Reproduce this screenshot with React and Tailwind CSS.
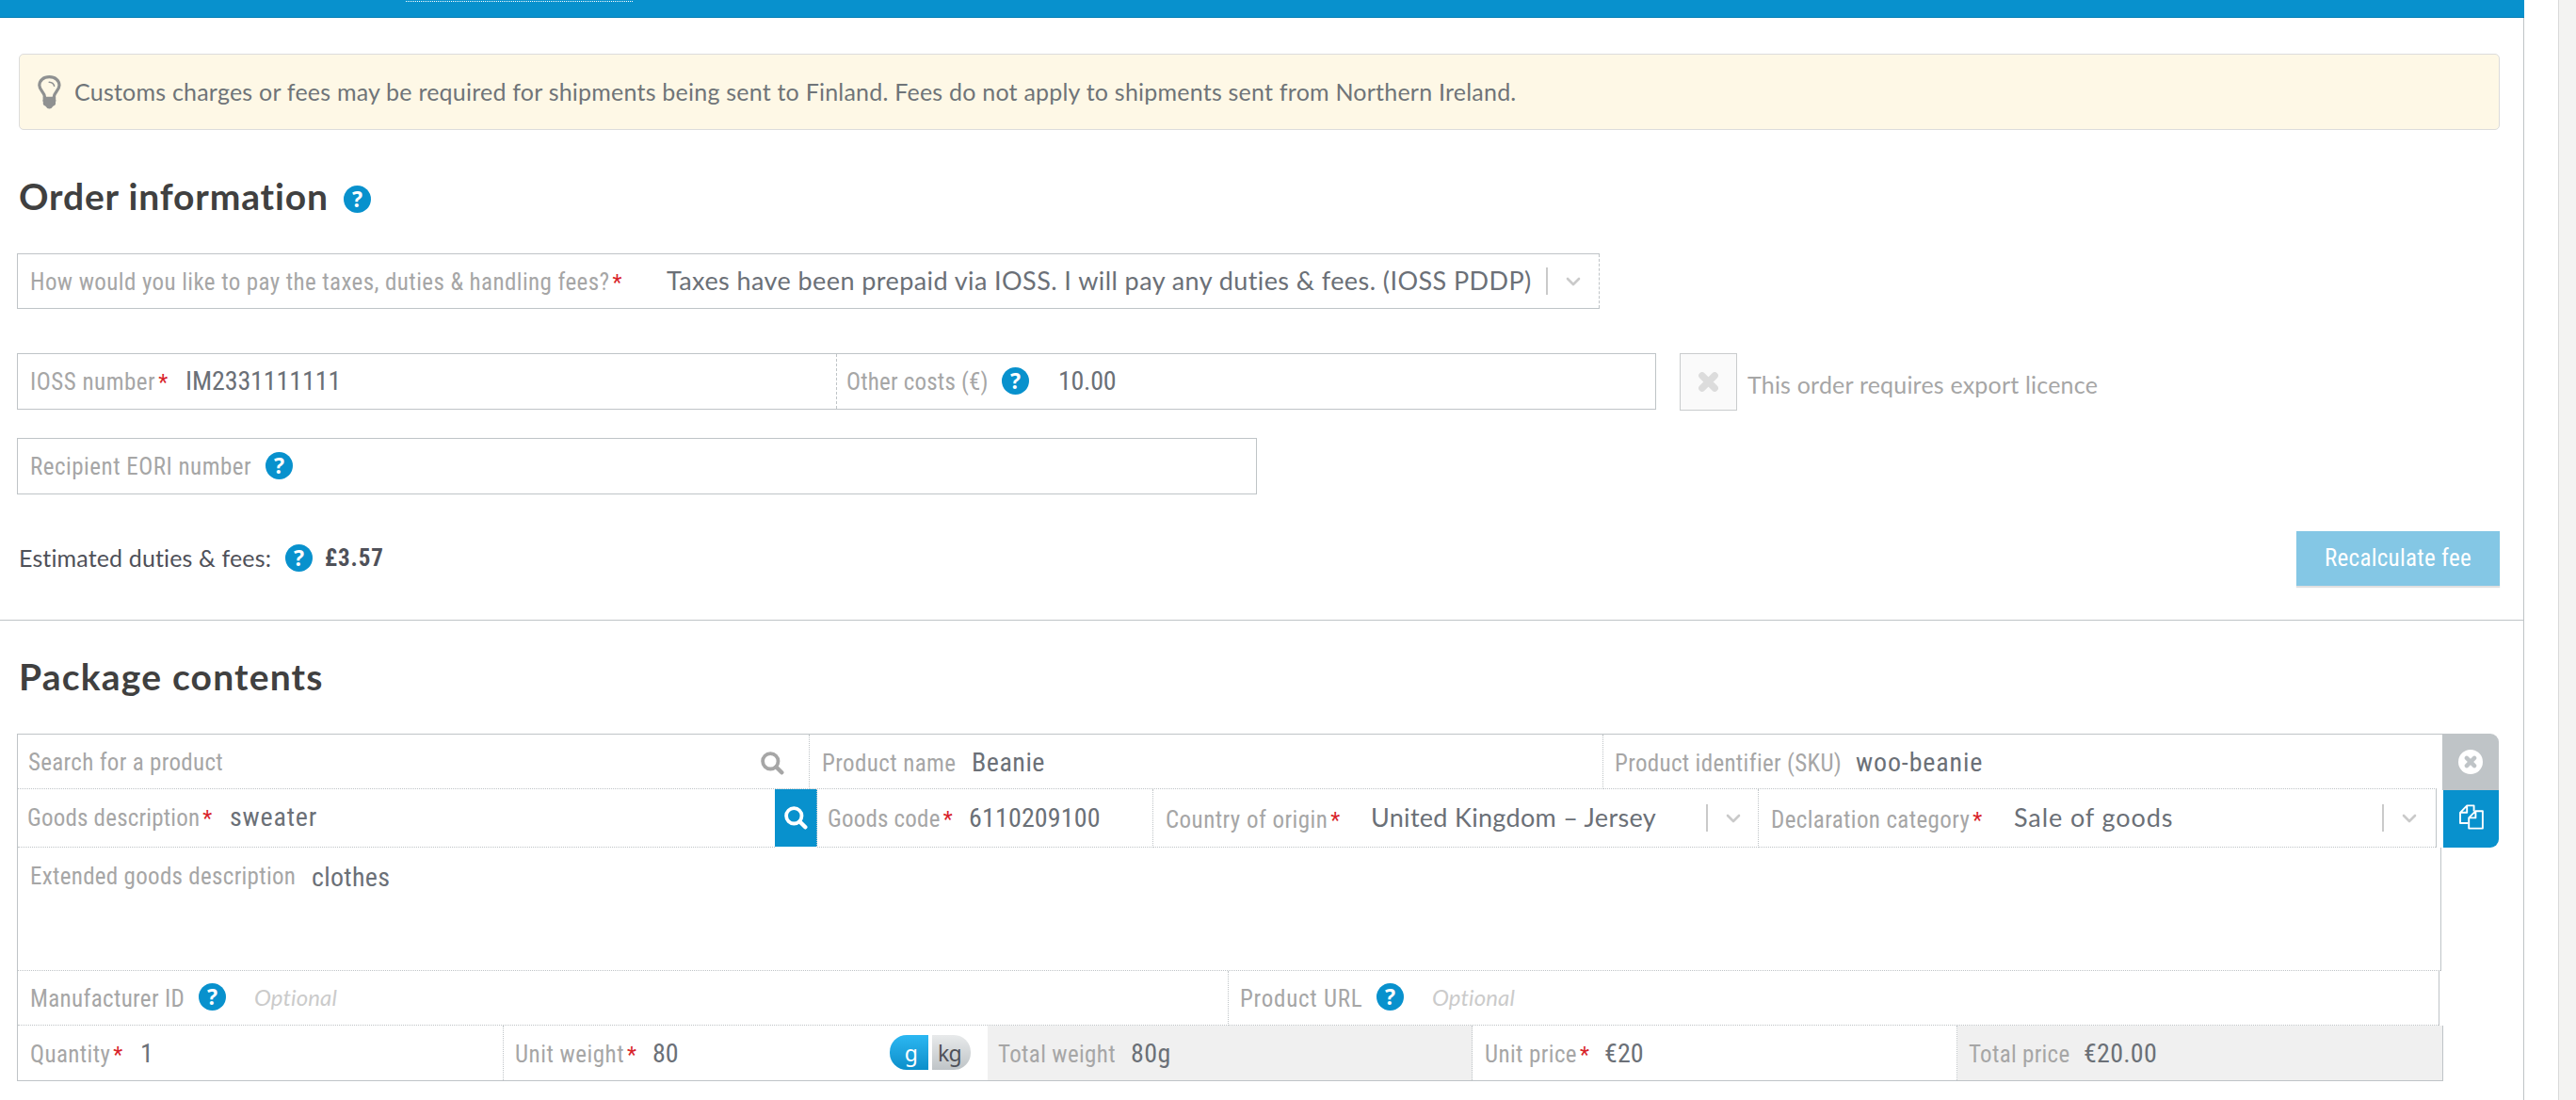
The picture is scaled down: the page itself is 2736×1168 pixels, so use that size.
import clsx from "clsx";

// Small "?" badge shown next to labels
function Help({ className }) {
  return (
    <span
      className={clsx(
        "flex h-[29px] w-[29px] shrink-0 items-center justify-center rounded-full bg-[#0891cd] font-['Noto_Sans',sans-serif] text-[23px] leading-none font-bold text-white",
        className
      )}
    >
      ?
    </span>
  );
}

function Label({ children, required, className }) {
  return (
    <span className={clsx("shrink-0 text-[25px] leading-[30px] whitespace-nowrap text-[#a6a6a6]", className)}>
      {children}
      {required && <span className="ml-[3px] text-[23px] leading-none tracking-normal text-[#d8232a]">*</span>}
    </span>
  );
}

function Value({ children, className }) {
  return (
    <span className={clsx("shrink-0 text-[28px] leading-[30px] whitespace-nowrap text-[#6b7077]", className)}>
      {children}
    </span>
  );
}

function SelectValue({ children, className }) {
  return (
    <span
      className={clsx(
        "shrink-0 font-['Lato',sans-serif] text-[27px] leading-[30px] whitespace-nowrap text-[#6b7077]",
        className
      )}
    >
      {children}
    </span>
  );
}

function Optional() {
  return (
    <span className="relative -top-[1px] font-['Lato',sans-serif] text-[24px] leading-[28px] tracking-[0.1px] text-[#cbcbcb] italic">
      Optional
    </span>
  );
}

// One table cell: label and value share a baseline
function Cell({ children, className }) {
  return <div className={clsx("flex shrink-0 items-baseline border-[#bfc4c7]", className)}>{children}</div>;
}

function SelectArrow({ className }) {
  return (
    <span className={clsx("ml-auto flex h-[29px] items-center gap-[19px] self-start", className)}>
      <span className="h-[29px] w-[2px] bg-[#cacaca]" />
      <svg width="16" height="10" viewBox="0 0 16 10" fill="none">
        <path d="M2 2 L8 8 L14 2" stroke="#cacaca" strokeWidth="2.6" strokeLinecap="round" strokeLinejoin="round" />
      </svg>
    </span>
  );
}

function SearchIcon({ className }) {
  return (
    <svg className={className} width="25" height="25" viewBox="0 0 25 25" fill="none" stroke="currentColor">
      <circle cx="10.3" cy="10.3" r="8.2" strokeWidth="3.8" />
      <path d="M16.5 16.5 L22.3 22.3" strokeWidth="4.4" strokeLinecap="round" />
    </svg>
  );
}

function BulbIcon() {
  return (
    <svg width="25" height="36" viewBox="0 0 25 36" fill="none">
      <path
        d="M7.6 23.5 C7.6 18 1.8 16 1.8 10.6 C1.8 5.4 6.2 1.7 12.4 1.7 C18.6 1.7 23 5.4 23 10.6 C23 16 17.2 18 17.2 23.5"
        stroke="#8f9191"
        strokeWidth="3.2"
      />
      <path d="M12.2 7.3 C15.2 7.5 17 8.8 17.6 11.2" stroke="#8f9191" strokeWidth="1.5" strokeLinecap="round" />
      <path
        d="M5.6 22.8 H19.2 V26 L19.6 27 L19 28 V30.6 Q18.8 32.2 16.4 32.8 Q14.8 35.6 12.4 35.6 Q10 35.6 8.4 32.8 Q6 32.2 5.8 30.6 V28 L5.2 27 L5.6 26 Z"
        fill="#8f9191"
      />
    </svg>
  );
}

function CrossIcon({ size, className }) {
  return (
    <svg className={className} width={size} height={size} viewBox="0 0 22 22" fill="none" stroke="currentColor">
      <path d="M4.6 4.6 L17.4 17.4 M17.4 4.6 L4.6 17.4" strokeWidth="7" strokeLinecap="round" />
    </svg>
  );
}

function CopyIcon() {
  return (
    <svg width="26" height="27" viewBox="0 0 26 27" fill="none" stroke="white" strokeWidth="1.9" strokeLinejoin="round">
      <path d="M9.5 20 H1 V8.8 L8.2 1.4 H15.6 V7.5 M8.2 1.4 V8.8 H1" />
      <path d="M10.2 14.4 L17.4 7.2 H24.9 V25.6 H10.2 Z M17.4 7.2 V14.4 H10.2" />
    </svg>
  );
}

function OrderInformation() {
  return (
    <section className="pr-[25px] pl-[18px]">
      <div className="mt-[38px] ml-[2px] flex h-[81px] items-center rounded-[5px] border border-[#dcdcdc] bg-[#fef8e6] pl-[19px]">
        <BulbIcon />
        <p className="ml-[14px] font-['Lato',sans-serif] text-[25px] tracking-[0.22px] text-[#6f7478]">
          Customs charges or fees may be required for shipments being sent to Finland. Fees do not apply to shipments
          sent from Northern Ireland.
        </p>
      </div>

      <div className="mt-[45px] flex h-[50px] items-center">
        <h2 className="w-[347px] pl-[2px] font-['Lato',sans-serif] text-[39px] leading-[50px] font-bold tracking-[0.85px] whitespace-nowrap text-[#404040]">
          Order information
        </h2>
        <Help className="mt-[6px]" />
      </div>

      <Cell className="mt-9 h-[59px] w-[1681px] border border-r-0 pt-[13px]">
        <Label required className="w-[675px] pl-[13px] tracking-[0.41px]">
          How would you like to pay the taxes, duties &amp; handling fees?
        </Label>
        <SelectValue className="pl-[14px] tracking-[0.42px]">
          Taxes have been prepaid via IOSS. I will pay any duties &amp; fees. (IOSS PDDP)
        </SelectValue>
        <SelectArrow className="mt-[1px] -mb-4 pr-[19px]" />
        <span className="-mt-[13px] h-[57px] self-start border-r border-dashed border-[#bfc4c7]" />
      </Cell>

      <div className="mt-[47px] flex items-start">
        <div className="flex h-[60px] w-[1741px] border border-[#bfc4c7]">
          <Cell className="w-[870px] border-r border-dashed pt-[14px]">
            <Label required className="w-[178px] pl-[13px] tracking-[0.5px]">
              IOSS number
            </Label>
            <Value className="tracking-[-0.1px]">IM2331111111</Value>
          </Cell>
          <Cell className="pt-[14px]">
            <Label className="w-[175px] pl-[10px] tracking-[0.2px]">Other costs (€)</Label>
            <Help className="self-start" />
            <Value className="ml-[31px] tracking-[-0.3px]">10.00</Value>
          </Cell>
        </div>
        <div className="ml-[25px] flex h-[61px] w-[61px] items-center justify-center border border-[#c9cccd] bg-[#fafafa] text-[#dcdcdc]">
          <CrossIcon size={23} />
        </div>
        <span className="mt-[18px] ml-[11px] font-['Lato',sans-serif] text-[25px] leading-[30px] tracking-[0.2px] text-[#a6a6a6]">
          This order requires export licence
        </span>
      </div>

      <Cell className="mt-[29px] h-[60px] w-[1317px] border pt-[15px]">
        <Label className="w-[263px] pl-[13px] tracking-[0.5px]">Recipient EORI number</Label>
        <Help className="-mt-[1px] self-start" />
      </Cell>

      <div className="mt-[39px] flex h-[58px] items-center text-[25px] text-[#4f5159]">
        <span className="w-[285px] pl-[2px] font-['Lato',sans-serif] tracking-[0.14px]">Estimated duties &amp; fees:</span>
        <Help className="-mt-[1px]" />
        <b className="ml-[13px] tracking-[0.9px]">£3.57</b>
        <button className="ml-auto h-[58px] w-[216px] bg-[#84c7e5] tracking-[0.3px] text-white shadow-[0_2px_1px_rgba(0,0,0,0.12)]">
          Recalculate fee
        </button>
      </div>
    </section>
  );
}

function PackageContents() {
  return (
    <section className="pl-[18px]">
      <h2 className="mt-[34px] pl-[2px] font-['Lato',sans-serif] text-[39px] leading-[50px] font-bold tracking-[1.2px] text-[#404040]">
        Package contents
      </h2>

      <div className="mt-9 flex items-start">
        <div className="w-[2577px]">
          <div className="flex h-[59px] w-[2576px] border-t border-l border-[#bfc4c7]">
            <Cell className="w-[841px] border-r border-b border-dotted pt-[15px]">
              <Label className="pl-[11px] tracking-[0.32px]">Search for a product</Label>
              <SearchIcon className="mt-[3px] mr-[26px] -mb-2 ml-auto self-start text-[#a6a6a6]" />
            </Cell>
            <Cell className="w-[843px] border-r border-b border-dotted pt-[15px]">
              <Label className="w-[172px] pl-[13px] tracking-[0.4px]">Product name</Label>
              <Value className="tracking-[0.5px]">Beanie</Value>
            </Cell>
            <Cell className="w-[885px] border-b border-dotted pt-[15px]">
              <Label className="w-[268px] pl-[12px] tracking-[0.33px]">Product identifier (SKU)</Label>
              <Value className="tracking-[0.85px]">woo-beanie</Value>
            </Cell>
          </div>

          <div className="flex h-[62px] border-l border-[#bfc4c7]">
            <Cell className="w-[804px] border-b border-dotted pt-[15px]">
              <Label required className="w-[225px] pl-[10px] tracking-[0.2px]">
                Goods description
              </Label>
              <Value className="tracking-[0.8px]">sweater</Value>
            </Cell>
            <div className="flex h-[61px] w-[45px] items-center justify-center border-r border-dotted border-[#bfc4c7] bg-[#0891cd]">
              <SearchIcon className="text-white" />
            </div>
            <Cell className="w-[357px] border-r border-b border-dotted pt-[16px]">
              <Label required className="w-[161px] pl-[11px] tracking-[0.2px]">
                Goods code
              </Label>
              <Value className="tracking-[0.15px]">6110209100</Value>
            </Cell>
            <Cell className="w-[643px] border-r border-b border-dotted pt-[16px]">
              <Label required className="w-[231px] pl-[13px] tracking-[0.45px]">
                Country of origin
              </Label>
              <SelectValue className="relative -top-[1px] tracking-[0.3px]">United Kingdom – Jersey</SelectValue>
              <SelectArrow className="-mb-4 pr-[18px]" />
            </Cell>
            <div className="flex border-r border-[#bfc4c7]">
              <Cell className="w-[719px] border-b border-dotted pt-[16px]">
                <Label required className="w-[269px] pl-[13px] tracking-[0.38px]">
                  Declaration category
                </Label>
                <SelectValue className="relative -top-[1px] pl-[2px] tracking-[0.9px]">Sale of goods</SelectValue>
                <SelectArrow className="-mb-4 pr-[20px]" />
              </Cell>
            </div>
          </div>

          <div className="h-[131px] w-[2575px] border-x border-[#bfc4c7]">
            <Cell className="h-full border-b border-dotted pt-[15px]">
              <Label className="w-[312px] pl-[13px] tracking-[0.3px]">Extended goods description</Label>
              <Value className="relative top-[2px] tracking-[0.3px]">clothes</Value>
            </Cell>
          </div>

          <div className="flex h-[58px] w-[2573px] border-x border-[#bfc4c7]">
            <Cell className="w-[1286px] border-r border-b border-dotted pt-[15px]">
              <Label className="w-[192px] pl-[13px] tracking-[0.35px]">Manufacturer ID</Label>
              <Help className="mr-[30px] -mt-[2px] self-start" />
              <Optional />
            </Cell>
            <Cell className="w-[1285px] border-b border-dotted pt-[15px]">
              <Label className="w-[157px] pl-[12px] tracking-[0.75px]">Product URL</Label>
              <Help className="mr-[30px] -mt-[2px] self-start" />
              <Optional />
            </Cell>
          </div>

          <div className="flex h-[59px] border border-t-0 border-[#bfc4c7]">
            <Cell className="w-[516px] border-r border-dotted pt-[15px]">
              <Label required className="w-[130px] pl-[13px] tracking-[0.4px]">
                Quantity
              </Label>
              <Value>1</Value>
            </Cell>
            <Cell className="w-[514px] pt-[15px]">
              <Label required className="w-[158px] pl-[12px] tracking-[0.5px]">
                Unit weight
              </Label>
              <Value>80</Value>
              <div className="mr-[18px] -mt-[5px] ml-auto flex h-[37px] gap-1 self-start font-['Noto_Sans',sans-serif] text-[23px] leading-[38px]">
                <span className="w-[41px] rounded-l-[18px] bg-linear-to-b from-[#2bb7f2] to-[#0b8fca] pr-[11px] text-right text-white">
                  g
                </span>
                <span className="w-[41px] rounded-r-[18px] bg-linear-to-b from-[#e8eaeb] to-[#bfc4c7] pl-[6px] tracking-[-0.8px] text-[#4f5159]">
                  kg
                </span>
              </div>
            </Cell>
            <Cell className="w-[515px] border-r border-dotted bg-[#f0f0f0] pt-[15px]">
              <Label className="w-[152px] pl-[11px] tracking-[0.35px]">Total weight</Label>
              <Value className="tracking-[0.4px]">80g</Value>
            </Cell>
            <Cell className="w-[515px] border-r border-dotted pt-[15px]">
              <Label required className="w-[140px] pl-[13px] tracking-[0.4px]">
                Unit price
              </Label>
              <Value className="tracking-[0.1px]">€20</Value>
            </Cell>
            <Cell className="w-[515px] bg-[#f0f0f0] pt-[15px]">
              <Label className="w-[134px] pl-[12px] tracking-[0.3px]">Total price</Label>
              <Value className="tracking-[0.25px]">€20.00</Value>
            </Cell>
          </div>
        </div>

        {/* Row actions */}
        <div className="-ml-[1px] w-[60px]">
          <button className="flex h-[60px] w-full items-center justify-center rounded-tr-[9px] bg-[#bfc4c7]">
            <span className="flex h-[26px] w-[26px] items-center justify-center rounded-full bg-white text-[#bfc4c7]">
              <CrossIcon size={14} />
            </span>
          </button>
          <button className="ml-[1px] flex h-[61px] w-[59px] items-center justify-center rounded-br-[9px] bg-[#0891cd] pb-1">
            <CopyIcon />
          </button>
        </div>
      </div>
    </section>
  );
}

export default function App() {
  return (
    <div className="flex h-[1168px] w-[2736px] overflow-hidden bg-white font-['Roboto_Condensed','Roboto',sans-serif]">
      <main className="flex w-[2681px] flex-col">
        <header className="h-[19px] shrink-0 border-b border-[#077fb4] bg-[#0891cd] pt-[1px] pl-[431px]">
          <div className="w-[241px] border-t border-dotted border-white" />
        </header>
        <div className="flex-1 border-r border-[#bfc4c7]">
          <OrderInformation />
          <hr className="mt-9 border-[#bfc4c7]" />
          <PackageContents />
        </div>
      </main>
      <aside className="ml-auto w-[19px] border-l border-[#d9d9d9] bg-[#f3f3f2]" />
    </div>
  );
}
